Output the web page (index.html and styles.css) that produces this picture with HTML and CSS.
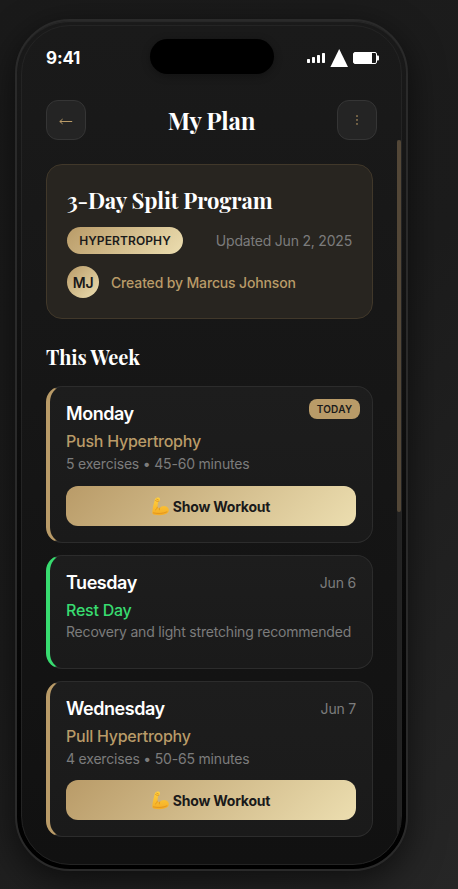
FILE: index.html
```html
<!DOCTYPE html>
<html lang="en">
<head>
<meta charset="utf-8">
<title>My Plan</title>
<link rel="stylesheet" href="styles.css">
</head>
<body>
<svg width="0" height="0" class="defs" aria-hidden="true">
  <defs>
    <linearGradient id="skin" x1="0" y1="0" x2="0" y2="1">
      <stop offset="0" stop-color="#ffd13f"/><stop offset="1" stop-color="#f5ad25"/>
    </linearGradient>
    <symbol id="arm" viewBox="0 0 18 19">
      <path d="M3 2.1C4 .5 7-.1 7.9 1.7c.5 1.2-.3 2.8-1.8 3.2l-.7 5.3c.7.5 1.5.8 2.2.8 1.7-2 4.9-2.7 7.2-1.2 2.3 1.4 2.7 4.3 1 6-2.4 2.5-9.5 3-14.3 1.7C.3 17.1.2 16 .4 14.6.7 10.200 1.900 6.200 3 2.100Z" fill="url(#skin)"/>
      <path d="M3.500 3.500c1 .9 2.100 1.200 3.300.7M5.300 10.200c-.2 1.300-.8 2.100-1.700 2.700M7.600 11c-.4.600-.5 1.200-.3 1.800M4.700 2.200l1.500.5M1.400 15.900c4.600 1 9.700.8 13.500-1" fill="none" stroke="#d98618" stroke-width=".65" stroke-linecap="round"/>
    </symbol>
  </defs>
</svg>
<main class="phone">
  <div class="screen">
    <div class="status">
      <span class="time">9:41</span>
      <span class="island"></span>
      <span class="indicators">
        <svg width="72" height="20" viewBox="0 0 72 20" fill="#fff">
          <rect x="0" y="11" width="3" height="4" rx=".7"/><rect x="5" y="9" width="3" height="6" rx=".7"/><rect x="10" y="7" width="3" height="8" rx=".7"/><rect x="15" y="5" width="3" height="10" rx=".7"/>
          <path d="M32.200 1 41 19H23.400Z"/>
          <rect x="46.500" y="4.500" width="23" height="11" rx="1.500" fill="none" stroke="#fff"/>
          <rect x="47" y="5" width="18" height="10"/>
          <path d="M70 7.500h1q1 0 1 1v3q0 1-1 1h-1Z"/>
        </svg>
      </span>
    </div>
    <header class="header">
      <button class="icon-btn" aria-label="Back"><svg width="14" height="8" viewBox="0 0 14 8"><path d="M.8 4.500h12.400M3.600 2.100.8 4.500l2.800 2.400" fill="none" stroke="#b99b68"/></svg></button>
      <h1 class="title">My Plan</h1>
      <button class="icon-btn" aria-label="Menu"><svg class="dots" width="2" height="10" viewBox="0 0 2 10" fill="#a28759"><rect x=".2" y=".3" width="1.600" height="1.500"/><rect x=".2" y="4.200" width="1.600" height="1.500"/><rect x=".2" y="8.200" width="1.600" height="1.500"/></svg></button>
    </header>
    <section class="content">
      <article class="plan">
        <h2 class="plan-title">3-Day Split Program</h2>
        <div class="plan-meta"><span class="pill">HYPERTROPHY</span><span class="updated">Updated Jun 2, 2025</span></div>
        <div class="coach"><span class="avatar">MJ</span><span class="coach-name">Created by Marcus Johnson</span></div>
      </article>
      <h2 class="week">This Week</h2>
      <div class="days">
        <article class="day">
          <span class="today">TODAY</span>
          <div class="day-head"><h3 class="day-name">Monday</h3></div>
          <p class="focus">Push Hypertrophy</p>
          <p class="detail">5 exercises • 45-60 minutes</p>
          <button class="show"><svg class="arm" width="18" height="19"><use href="#arm"/></svg><span>Show Workout</span></button>
        </article>
        <article class="day rest">
          <div class="day-head"><h3 class="day-name">Tuesday</h3><span class="date">Jun 6</span></div>
          <p class="focus">Rest Day</p>
          <p class="detail">Recovery and light stretching recommended</p>
        </article>
        <article class="day">
          <div class="day-head"><h3 class="day-name">Wednesday</h3><span class="date">Jun 7</span></div>
          <p class="focus">Pull Hypertrophy</p>
          <p class="detail">4 exercises • 50-65 minutes</p>
          <button class="show"><svg class="arm" width="18" height="19"><use href="#arm"/></svg><span>Show Workout</span></button>
        </article>
      </div>
    </section>
    <div class="scrollbar"><div class="thumb"></div></div>
  </div>
</main>
</body>
</html>
```
FILE: styles.css
```css
* { box-sizing: border-box; margin: 0; padding: 0; }
html { height: 889px; overflow: hidden; }
body {
  height: 889px;
  padding: 19px 0 0 15px;
  overflow: hidden;
  background: linear-gradient(135deg, #1a1a1a 0%, #1c1c1c 50%, #262626 100%);
  font-family: Inter, "Liberation Sans", sans-serif;
  color: #fff;
}
.defs { position: absolute; }
.phone {
  width: 393px;
  height: 852px;
  padding: 4px;
  border: 2px solid #2a2a2a;
  border-radius: 55px;
  background: linear-gradient(180deg, #1a1a1a, #000);
  box-shadow: 0 10px 35px rgba(0, 0, 0, .6), inset 0 2px 1px -1px #2a2a2a;
}
.screen {
  position: relative;
  height: 840px;
  overflow: hidden;
  border: 1px solid #242424;
  border-radius: 49px;
  background: linear-gradient(180deg, #1a1a1a, #111);
}
.status {
  display: grid;
  grid-template-columns: 1fr 124px 1fr;
  align-items: center;
  height: 35px;
  margin-top: 13px;
  padding: 0 24px;
}
.time { font-size: 17px; font-weight: 700; line-height: 20px; letter-spacing: -.15px; padding-top: 3px; }
.island { height: 35px; border-radius: 18px; background: #000; box-shadow: 0 2px 8px rgba(0, 0, 0, .3); }
.indicators { display: flex; justify-content: flex-end; padding-top: 3px; margin-right: -2px; }
.header {
  display: flex;
  align-items: center;
  justify-content: space-between;
  height: 40px;
  margin: 26px 24px 0;
}
.icon-btn {
  display: flex;
  align-items: center;
  justify-content: center;
  width: 40px;
  height: 40px;
  border: 1px solid #353535;
  border-radius: 12px;
  background: #242424;
}
.icon-btn svg { margin-top: 2px; }
.icon-btn .dots { margin-top: -1px; }
.title, .plan-title, .week { font-family: "Playfair Display", "Liberation Serif", serif; font-weight: 700; white-space: nowrap; }
.title { font-size: 24px; line-height: 36px; padding-bottom: 1px; letter-spacing: -.22px; }
.content { padding: 24px 28px 0 24px; }
.plan {
  height: 155px;
  padding: 20px 20px 0;
  border: 1px solid #41382a;
  border-radius: 16px;
  background: #282520;
}
.plan-title { height: 42px; font-size: 22px; line-height: 31px; letter-spacing: -.13px; }
.plan-meta { display: flex; align-items: center; justify-content: space-between; height: 27px; }
.pill {
  width: 116px;
  height: 27px;
  border-radius: 14px;
  background: linear-gradient(135deg, #b99b68, #ecdeb0);
  color: #1a1a1a;
  font-size: 12px;
  font-weight: 600;
  line-height: 28px;
  text-align: center;
  letter-spacing: .1px;
}
.updated { font-size: 14px; line-height: 20px; letter-spacing: -.2px; color: #7c7c7c; padding-top: 1px; }
.coach { display: flex; align-items: center; gap: 12px; margin-top: 12px; }
.avatar {
  width: 32px;
  height: 32px;
  border-radius: 50%;
  background: linear-gradient(135deg, #b99b68, #ecdeb0);
  color: #1a1a1a;
  font-size: 14px;
  font-weight: 600;
  letter-spacing: -.3px;
  line-height: 34px;
  text-align: center;
}
.coach-name { font-size: 14px; font-weight: 500; letter-spacing: -.15px; color: #b99b68; padding-top: 1px; }
.week { height: 28px; margin: 24px 0 15px; font-size: 20px; line-height: 28px; letter-spacing: -.08px; }
.days { display: flex; flex-direction: column; gap: 12px; }
.day {
  position: relative;
  height: 157px;
  padding: 14px 16px 0;
  border: 1px solid #2c2c2c;
  border-left: 4px solid #b99b68;
  border-radius: 16px;
  background: linear-gradient(180deg, #1d1d1d, #1a1a1a);
}
.day.rest { height: 114px; border-left-color: #38dc70; }
.day:last-child { height: 156px; }
.day-head { display: flex; align-items: center; justify-content: space-between; height: 25px; }
.day-name { font-size: 18px; font-weight: 600; line-height: 25px; letter-spacing: -.45px; }
.date { font-size: 14px; letter-spacing: -.2px; color: #7c7c7c; }
.today {
  position: absolute;
  top: 12px;
  right: 12px;
  width: 51px;
  height: 20px;
  border-radius: 8px;
  background: #b99b68;
  color: #1a1a1a;
  font-size: 10px;
  font-weight: 600;
  line-height: 21px;
  text-align: center;
  letter-spacing: .25px;
}
.focus { margin-top: 3px; font-size: 16px; font-weight: 500; line-height: 24px; letter-spacing: -.25px; color: #b99b68; }
.rest .focus { color: #38dc70; }
.detail { font-size: 14px; line-height: 22px; letter-spacing: -.19px; color: #7c7c7c; white-space: nowrap; }
.rest .detail { margin-top: -1px; }
.show {
  display: flex;
  align-items: center;
  justify-content: center;
  gap: 3px;
  width: 100%;
  height: 40px;
  margin-top: 11px;
  border: 0;
  border-radius: 12px;
  background: linear-gradient(135deg, #b99b68, #ecdeb0);
  color: #1a1a1a;
  font-family: Inter, "Liberation Sans", sans-serif;
  font-size: 14px;
  font-weight: 700;
  letter-spacing: -.22px;
}
.day:last-child .show { margin-top: 10px; }
.show span { padding-top: 1px; }
.scrollbar { position: absolute; top: 114px; right: 0; bottom: 0; width: 4px; background: #222; }
.thumb { height: 372px; border-radius: 2px; background: #534737; }
```
